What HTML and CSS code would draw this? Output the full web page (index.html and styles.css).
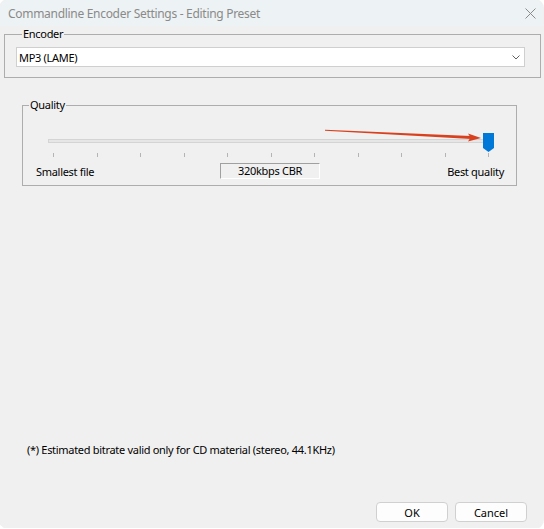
FILE: index.html
```html
<!DOCTYPE html>
<html lang="en">
<head>
    <meta charset="UTF-8">
    <title>Commandline Encoder Settings - Editing Preset</title>
    <link rel="stylesheet" href="styles.css">
</head>
<body>
    <div class="window">
        <div class="titlebar">
            <span class="title">Commandline Encoder Settings - Editing Preset</span>
            <svg class="close" width="11" height="11" viewBox="0 0 11 11">
                <path d="M0.5 0.5 L10.5 10.5 M10.5 0.5 L0.5 10.5" stroke="#8a8a8a" stroke-width="1" fill="none"/>
            </svg>
        </div>

        <fieldset class="group encoder">
            <legend>Encoder</legend>
            <div class="select">
                <span>MP3 (LAME)</span>
                <svg width="8" height="5" viewBox="0 0 8 5">
                    <path d="M0.5 0.5 L4 4 L7.5 0.5" stroke="#606060" stroke-width="1" fill="none"/>
                </svg>
            </div>
        </fieldset>

        <fieldset class="group quality">
            <legend>Quality</legend>
            <div class="slider">
                <div class="track"></div>
                <div class="ticks">
                    <i></i><i></i><i></i><i></i><i></i><i></i><i></i><i></i><i></i><i></i><i></i>
                </div>
                <svg class="thumb" width="11" height="19" viewBox="0 0 11 19">
                    <path d="M0 0 H11 V15 L5.5 19 L0 15 Z" fill="#0078d7"/>
                </svg>
                <!-- callout pointing at the slider position -->
                <svg class="pointer" width="162" height="18" viewBox="0 0 162 18">
                    <polygon points="2,2.8 148,9 148,12 2,3.8" fill="#d9411e"/>
                    <polygon points="145,6.4 158,10.9 145,14.6 147.5,10.6" fill="#d9411e"/>
                </svg>
            </div>
            <div class="scale">
                <span class="min">Smallest file</span>
                <span class="value">320kbps CBR</span>
                <span class="max">Best quality</span>
            </div>
        </fieldset>

        <p class="note">(*) Estimated bitrate valid only for CD material (stereo, 44.1KHz)</p>

        <div class="buttons">
            <button>OK</button>
            <button>Cancel</button>
        </div>
    </div>
</body>
</html>
```

FILE: styles.css
```css
body {
    margin: 0;
    background: #fff;
    font-family: "Noto Sans", "Open Sans", sans-serif;
    font-size: 11px;
    letter-spacing: -0.3px;
    color: #000;
}
.window {
    width: 543px;
    height: 528px;
    background: #f0f0f0;
    border-radius: 8px;
    box-shadow: 0 0 0 1px rgba(0, 0, 0, 0.06);
    overflow: hidden;
    display: flex;
    flex-direction: column;
}
.titlebar {
    height: 26px;
    flex: none;
    background: #edf2f4;
    display: flex;
    align-items: center;
    justify-content: space-between;
    padding: 0 7px 0 8px;
}
.title {
    color: #8a8a8a;
    font-size: 12px;
}
.group {
    margin: 0;
    padding: 0;
    border: 1px solid #adadad;
    min-width: 0;
}
.group legend {
    margin-left: 6px;
    padding: 0 1px;
    line-height: 14px;
}
.encoder {
    margin: 1px 2px 0 4px;
    padding: 6px 15px 10px 11px;
}
.select {
    height: 18px;
    background: #fff;
    border: 1px solid #cfcfcf;
    display: flex;
    align-items: center;
    justify-content: space-between;
    padding: 0 4px 0 2px;
}
.quality {
    margin: 20px 26px 0 22px;
    padding: 0 0 6px;
}
.slider {
    position: relative;
    height: 18px;
    padding-top: 27px;
}
.track {
    margin: 0 22px 0 25px;
    height: 2px;
    background: #e6e6e6;
    border: 1px solid #d4d4d4;
}
.ticks {
    margin: 10px 27px 0 30px;
    display: flex;
    justify-content: space-between;
}
.ticks i {
    width: 1px;
    height: 4px;
    background: #b4b4b4;
}
.thumb {
    position: absolute;
    left: 460px;
    top: 21px;
}
.pointer {
    position: absolute;
    left: 300px;
    top: 15px;
}
.scale {
    margin-top: 6px;
    display: grid;
    grid-template-columns: 1fr auto 1fr;
    align-items: center;
    padding: 0 12px 0 13px;
}
.max {
    text-align: right;
}
.value {
    width: 98px;
    height: 14px;
    line-height: 14px;
    text-align: center;
    border: 1px solid;
    border-color: #a0a0a0 #fff #fff #a0a0a0;
}
.note {
    margin: auto 0 0;
    padding-left: 27px;
    line-height: 16px;
}
.buttons {
    margin-top: 44px;
    padding: 0 16px 6px 0;
    display: flex;
    justify-content: flex-end;
    gap: 7px;
}
.buttons button {
    width: 72px;
    height: 20px;
    font: inherit;
    color: #000;
    background: #fdfdfd;
    border: 1px solid #d0d0d0;
    border-radius: 4px;
    padding: 0;
}
```
